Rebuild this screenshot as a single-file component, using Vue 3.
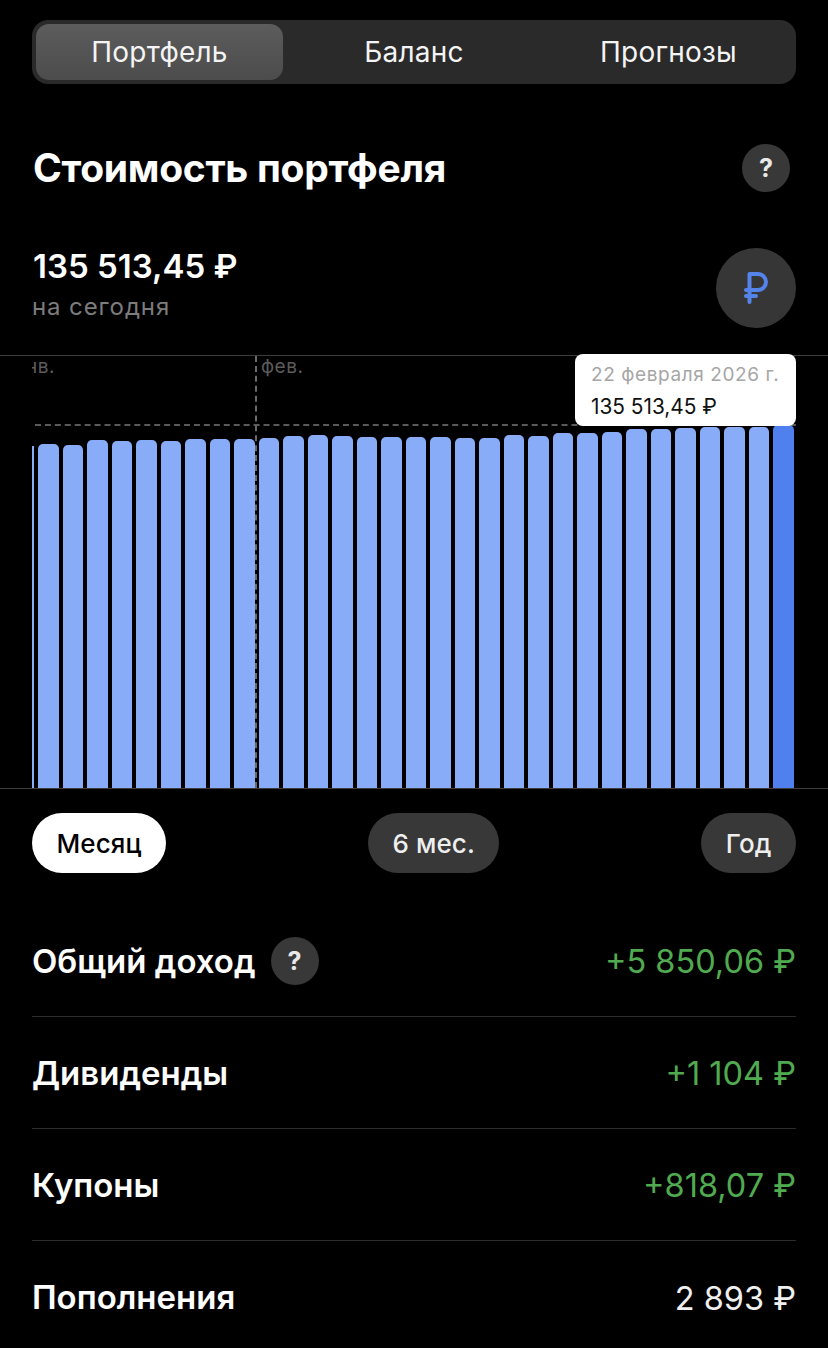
<script setup>
const tops = [444,445,440,441,440,441,438.5,439,438.5,438,435.5,435,436,437,437,436.5,436.5,438,438,435,436,433,433,432,429,429,428,427,427,427,425]
const bars = tops.map((t, i) => ({ h: 788 - t, last: i === tops.length - 1 }))
const rows = [
  { label: 'Общий доход', value: '+5 850,06 ₽', green: true, help: true },
  { label: 'Дивиденды', value: '+1 104 ₽', green: true },
  { label: 'Купоны', value: '+818,07 ₽', green: true },
  { label: 'Пополнения', value: '2 893 ₽' }
]
</script>

<template>
  <div class="page">
    <div class="segments">
      <div class="seg active">Портфель</div>
      <div class="seg">Баланс</div>
      <div class="seg">Прогнозы</div>
    </div>

    <div class="title-row">
      <h1>Стоимость портфеля</h1>
      <div class="help">?</div>
    </div>

    <div class="summary">
      <div>
        <div class="amount">135 513,45 ₽</div>
        <div class="sub">на сегодня</div>
      </div>
      <div class="currency">
        <svg width="28" height="36" viewBox="0 0 28 36" fill="none" stroke="#5483EA" stroke-width="4" stroke-linecap="round" stroke-linejoin="round">
          <path d="M7.5 32V4H16a8 8 0 0 1 0 16H4" />
          <path d="M4 26h10" />
        </svg>
      </div>
    </div>

    <div class="chart">
      <div class="axis jan"><span>янв.</span></div>
      <div class="axis feb">фев.</div>
      <div class="vline"></div>
      <div class="hline"></div>
      <div class="bars">
        <div class="sliver"></div>
        <div v-for="(b, i) in bars" :key="i" class="bar" :class="{ last: b.last }" :style="{ height: b.h + 'px' }"></div>
      </div>
      <div class="tooltip">
        <div class="tip-date">22 февраля 2026 г.</div>
        <div class="tip-value">135 513,45 ₽</div>
      </div>
    </div>

    <div class="periods">
      <div class="pill on">Месяц</div>
      <div class="pill">6 мес.</div>
      <div class="pill">Год</div>
    </div>

    <div class="rows">
      <div v-for="r in rows" :key="r.label" class="row">
        <div class="row-label">
          <span>{{ r.label }}</span>
          <div v-if="r.help" class="help">?</div>
        </div>
        <div class="row-value" :class="{ green: r.green }">{{ r.value }}</div>
      </div>
    </div>
  </div>
</template>

<style>
html, body { background: #000; }
</style>

<style scoped>
.page {
  width: 828px;
  height: 1348px;
  overflow: hidden;
  background: #000;
  color: #fff;
  font-family: Inter, "Noto Sans", sans-serif;
  padding-top: 20px;
  box-sizing: border-box;
}
.segments {
  margin: 0 32px;
  height: 64px;
  box-sizing: border-box;
  padding: 4px;
  display: grid;
  grid-template-columns: 247px 262px 247px;
  background: #2a2a2a;
  border-radius: 16px;
}
.seg {
  display: flex;
  align-items: center;
  justify-content: center;
  font-size: 28px;
  letter-spacing: 0.2px;
  color: #f4f4f4;
}
.seg.active {
  background: linear-gradient(#5c5c5c, #4c4c4c);
  border-radius: 13px;
}
.title-row {
  margin: 60px 38px 0 33px;
  height: 48px;
  display: flex;
  align-items: center;
  justify-content: space-between;
}
h1 {
  margin: -2px 0 0;
  font-size: 39px;
  font-weight: 700;
  letter-spacing: -0.3px;
}
.help {
  width: 48px;
  height: 48px;
  border-radius: 50%;
  background: #383838;
  display: flex;
  align-items: center;
  justify-content: center;
  font-size: 25px;
  font-weight: 700;
  color: #e8e8e8;
}
.summary {
  margin: 56px 32px 0 33px;
  height: 80px;
  display: flex;
  justify-content: space-between;
  align-items: flex-start;
}
.amount {
  font-size: 33px;
  font-weight: 600;
  line-height: 36px;
}
.sub {
  font-size: 24px;
  line-height: 30px;
  margin-top: 8px;
  margin-left: -1px;
  color: #7c7c7c;
  letter-spacing: 0.9px;
}
.currency {
  width: 80px;
  height: 80px;
  border-radius: 50%;
  background: #363636;
  display: flex;
  align-items: center;
  justify-content: center;
}
.chart {
  position: relative;
  margin-top: 27px;
  height: 434px;
  box-sizing: border-box;
  border-top: 1px solid #3c3c3c;
  border-bottom: 1px solid #3c3c3c;
  overflow: visible;
}
.axis {
  position: absolute;
  top: 0;
  font-size: 19px;
  line-height: 22px;
  color: #5c5c5c;
  letter-spacing: 0.5px;
}
.jan {
  left: 32px;
  width: 23px;
  overflow: hidden;
  display: flex;
  justify-content: flex-end;
  white-space: nowrap;
}
.jan span { flex: none; }
.feb { left: 261px; }
.vline {
  position: absolute;
  left: 255px;
  top: 0;
  bottom: 0;
  width: 0;
  border-left: 2px dashed #6a6a6a;
  z-index: 2;
}
.hline {
  position: absolute;
  left: 35px;
  right: 32px;
  top: 68px;
  height: 0;
  border-top: 2px dashed #5a5a5a;
}
.bars {
  position: absolute;
  left: 32px;
  bottom: 0;
  display: flex;
  align-items: flex-end;
  gap: 4px;
}
.sliver {
  width: 2px;
  height: 342px;
  background: #8aadf8;
}
.bar {
  width: 20.5px;
  background: #89acf8;
  border-radius: 5px 5px 0 0;
}
.bar.last { background: #5080ee; }
.tooltip {
  position: absolute;
  left: 575px;
  top: -2px;
  width: 221px;
  height: 72px;
  box-sizing: border-box;
  padding: 8px 16px;
  background: #fff;
  border-radius: 8px;
  z-index: 3;
}
.tip-date {
  font-size: 19px;
  line-height: 26px;
  color: #a6a6a6;
  letter-spacing: 0.6px;
  white-space: nowrap;
}
.tip-value {
  font-size: 20.8px;
  line-height: 26px;
  margin-top: 6px;
  color: #111;
  white-space: nowrap;
}
.periods {
  margin: 24px 32px 0;
  display: flex;
  justify-content: space-between;
}
.pill {
  height: 60px;
  padding: 0 24.5px;
  border-radius: 30px;
  background: #383838;
  display: flex;
  align-items: center;
  font-size: 26px;
  font-weight: 500;
  letter-spacing: 0.1px;
  color: #eee;
}
.pill.on {
  background: #fff;
  color: #000;
}
.rows {
  margin: 32px 32px 0;
}
.row {
  height: 112px;
  display: flex;
  align-items: center;
  justify-content: space-between;
  border-bottom: 1px solid #2c2c2c;
  box-sizing: border-box;
}
.row:last-child { border-bottom: 0; }
.row-label {
  display: flex;
  align-items: center;
  gap: 15px;
  font-size: 33px;
  font-weight: 600;
}
.row-value {
  padding-top: 2px;
  font-size: 32.5px;
  color: #f0f0f0;
}
.row-value.green { color: #50ab50; }
</style>
